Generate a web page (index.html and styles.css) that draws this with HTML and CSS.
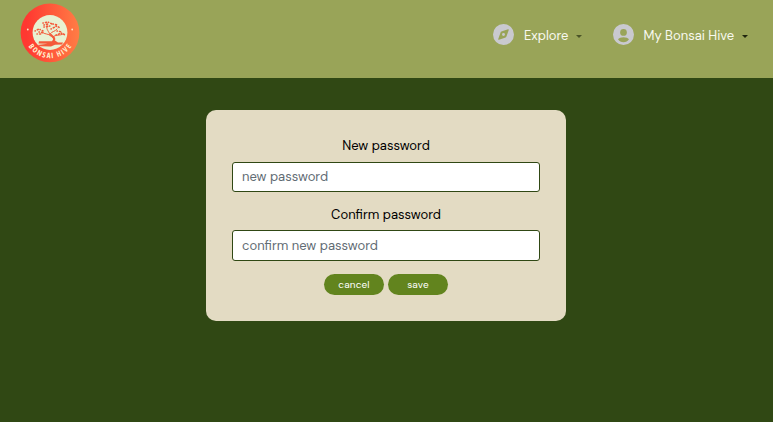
FILE: index.html
```html
<!DOCTYPE html>
<html lang="en">
<head>
  <meta charset="utf-8">
  <title>Bonsai Hive</title>
  <link rel="stylesheet" href="styles.css">
</head>
<body>
  <header class="navbar">
    <a class="brand">
      <svg class="logo" viewBox="0 0 60 60" role="img" aria-label="Bonsai Hive">
        <defs>
          <linearGradient id="sunset" x1="0" x2="1"><stop offset=".1" stop-color="#ff3831"/><stop offset="1" stop-color="#ff7d45"/></linearGradient>
          <path id="arc" d="M4.3 29.5a25.7 25.7 0 0 0 51.4 0"/>
        </defs>
        <circle cx="30" cy="29.8" r="29.4" fill="url(#sunset)"/>
        <circle cx="30" cy="29.5" r="17.4" fill="#e8f1d2"/>
        <g fill="none" stroke="#f45a3a" stroke-linecap="round">
          <path stroke-width="2.2" d="M33 38.5c3-3 0-4.5-2-6.5"/>
          <path stroke-width="1" d="M31 33c-3-3-6-1-9-4M30 32c-1-4-4-5-3-9M33 34c3-3 7-1 10-3M30 31c2-3 5-2 7-5"/>
          <path stroke-width="1.6" stroke-dasharray=".3 2.3 1 2" d="M15 28l4-2 4 2M17 31l5 0M23 20l5-1 4 2M24 24l6-1M31 26l6-3 3 2M36 32l6-2 3 2M24 22l4-1M33 21l4 1M19 29l5 1M37 28l5 1"/>
        </g>
        <path fill="#f45a3a" d="M19 38.2h13l3-.8 3 2h5l-1 2-7 .4-4 1.6-11-.2-2.5-1.2 10-1.2-9-.4z"/>
        <circle cx="7.8" cy="26.5" r=".9" fill="#ffe7c8"/>
        <circle cx="52.2" cy="26.5" r=".9" fill="#ffe7c8"/>
        <text class="logo-text"><textPath href="#arc" startOffset="14.5" textLength="51" lengthAdjust="spacing">BONSAI HIVE</textPath></text>
      </svg>
    </a>
    <nav class="menu">
      <a class="menu-item explore">
        <svg class="icon" viewBox="0 0 20 20"><path fill="#c9c9cf" fill-rule="evenodd" d="M10 0a10 10 0 1 1 0 20a10 10 0 0 1 0-20M14.3 5L8 7.2Q7.5 7.4 7.2 8L5 14.3Q4.9 15.2 5.7 15L12 12.8Q12.5 12.6 12.8 12L15 5.7Q15.1 4.8 14.3 5M10 8.6a1.4 1.4 0 1 1 0 2.8a1.4 1.4 0 0 1 0-2.8"/></svg>
        <span class="label">Explore</span>
        <i class="caret muted"></i>
      </a>
      <a class="menu-item account">
        <svg class="icon" viewBox="0 0 20 20"><path fill="#c9c9cf" fill-rule="evenodd" d="M10 0a10 10 0 1 1 0 20a10 10 0 0 1 0-20M10 4.8a3.2 3.2 0 1 0 0 6.4a3.2 3.2 0 0 0 0-6.4M4.8 14.6C6.8 18.2 13.2 18.2 15.2 14.6C13.8 11.9 6.2 11.9 4.8 14.6"/></svg>
        <span class="label">My Bonsai Hive</span>
        <i class="caret"></i>
      </a>
    </nav>
  </header>
  <main>
    <form class="card">
      <label class="field-label first" for="new">New password</label>
      <input class="field" id="new" type="password" placeholder="new password">
      <label class="field-label second" for="confirm">Confirm password</label>
      <input class="field tall" id="confirm" type="password" placeholder="confirm new password">
      <div class="actions">
        <button class="button" type="button">cancel</button>
        <button class="button" type="button">save</button>
      </div>
    </form>
  </main>
</body>
</html>
```
FILE: styles.css
```css
* { box-sizing: border-box; }
body {
  margin: 0;
  min-height: 100vh;
  background: #304814;
  font-family: "DM Sans", Inter, sans-serif;
  font-size: 13px;
}
.navbar {
  display: flex;
  justify-content: space-between;
  height: 78px;
  padding: 3px 25px 0 20px;
  background: #99a458;
}
.logo { display: block; width: 60px; height: 60px; }
.logo-text { font: 700 7.5px "Open Sans", sans-serif; font-stretch: 75%; fill: #fff0d0; }
.menu { display: flex; gap: 30.5px; height: 64px; align-items: center; }
.menu-item { display: flex; align-items: center; color: #f8f9ef; }
.icon { width: 21px; height: 21px; margin: -2px 10px 0 0; }
.label { line-height: 20px; margin-top: 2px; white-space: nowrap; }
.explore .label { width: 46px; }
.account .label { width: 91.5px; }
.caret {
  margin: 3px 0 0 6px;
  border: 3px solid transparent;
  border-top-color: #20260e;
  border-bottom: 0;
}
.account .caret { margin-left: 7px; }
.caret.muted { border-top-color: #4b5427; }
.card {
  display: flex;
  flex-direction: column;
  width: 360px;
  height: 211px;
  margin: 32px 0 0 206px;
  padding: 26px;
  border-radius: 10px;
  background: #e3dbc3;
}
.field-label { line-height: 20px; text-align: center; color: #000; }
.first { margin-bottom: 6px; }
.second { margin: 13px 0 5px; }
.field {
  width: 308px;
  height: 30px;
  padding: 0 9px 1px;
  border: 1px solid #304814;
  border-radius: 3px;
  background: #fff;
  font: inherit;
}
.tall { height: 31px; padding-bottom: 0; }
.field::placeholder { color: #626c74; opacity: 1; }
.actions { display: flex; justify-content: center; gap: 4px; margin-top: 13px; }
.button {
  width: 60px;
  height: 21px;
  padding: 0;
  border: 0;
  border-radius: 11px;
  background: #62841e;
  color: #fff;
  font: inherit;
  font-size: 10px;
  letter-spacing: .15px;
}
```
